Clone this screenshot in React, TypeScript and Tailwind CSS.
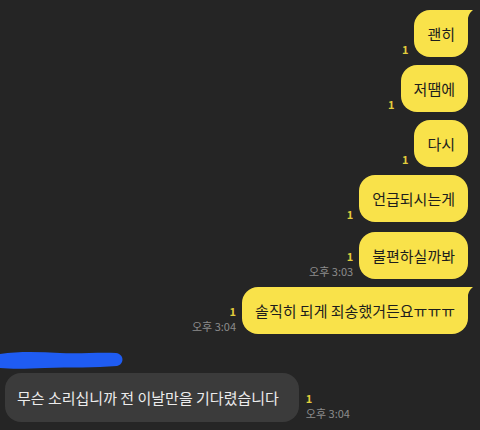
const font = { fontFamily: '"Noto Sans CJK KR", "Noto Sans", sans-serif' };

function Tail() {
  return (
    <svg
      className="absolute right-[-6px] top-0"
      width="14"
      height="16"
      viewBox="0 0 14 16"
    >
      <path d="M0 0 H13 C9 3 7.5 7 7 16 H0 Z" fill="#f9e24a" />
    </svg>
  );
}

type Msg = {
  text: string;
  time?: string;
  tail?: boolean;
  extra?: string;
};

const mine: Msg[] = [
  { text: "괜히", tail: true, extra: "mt-0" },
  { text: "저땜에" },
  { text: "다시" },
  { text: "언급되시는게" },
  { text: "불편하실까봐", time: "오후 3:03", extra: "mt-[10px]" },
  { text: "솔직히 되게 죄송했거든요ㅠㅠㅠ", time: "오후 3:04", tail: true },
];

function MyRow({ msg }: { msg: Msg }) {
  return (
    <div className={`flex items-end justify-end gap-[6px] ${msg.extra ?? "mt-2"}`}>
      <div className="flex flex-col items-end pb-[1px]">
        <span className="text-[11px] font-bold leading-[13px] text-[#e2cd3c]">1</span>
        {msg.time && (
          <span className="mt-[1px] text-[11px] leading-[14px] text-[#8c8c8c]">
            {msg.time}
          </span>
        )}
      </div>
      <div
        className={`relative bg-[#f9e24a] px-[13px] py-[13px] text-[15px] leading-[21px] text-[#1d1d1d] ${
          msg.tail ? "rounded-[16px] rounded-tr-[4px]" : "rounded-[16px]"
        }`}
      >
        {msg.tail && <Tail />}
        {msg.text}
      </div>
    </div>
  );
}

export default function App() {
  return (
    <div className="h-[430px] w-[480px] overflow-hidden bg-[#252525]" style={font}>
      <div className="flex flex-col pr-3 pt-[10px]">
        {mine.map((m, i) => (
          <MyRow key={i} msg={m} />
        ))}
      </div>

      <svg className="mt-[16px] block" width="126" height="20" viewBox="0 0 126 20">
        <path
          d="M0 4 C20 1 40 2 60 3 C80 4 100 2 116 3 C124 4 125 14 117 16 C95 18 70 17 45 18 C25 19 10 19 0 18 Z"
          fill="#1f5cf2"
        />
      </svg>

      <div className="mt-[3px] flex items-end gap-[7px] pl-[5px]">
        <div className="rounded-[16px] bg-[#3b3b3b] py-[14px] pl-3 pr-[20px] text-[15px] leading-[21px] text-[#ececec]">
          무슨 소리십니까 전 이날만을 기다렸습니다
        </div>
        <div className="flex flex-col items-start pb-[2px]">
          <span className="text-[11px] font-bold leading-[13px] text-[#e2cd3c]">1</span>
          <span className="mt-[1px] text-[11px] leading-[14px] text-[#8c8c8c]">오후 3:04</span>
        </div>
      </div>
    </div>
  );
}
